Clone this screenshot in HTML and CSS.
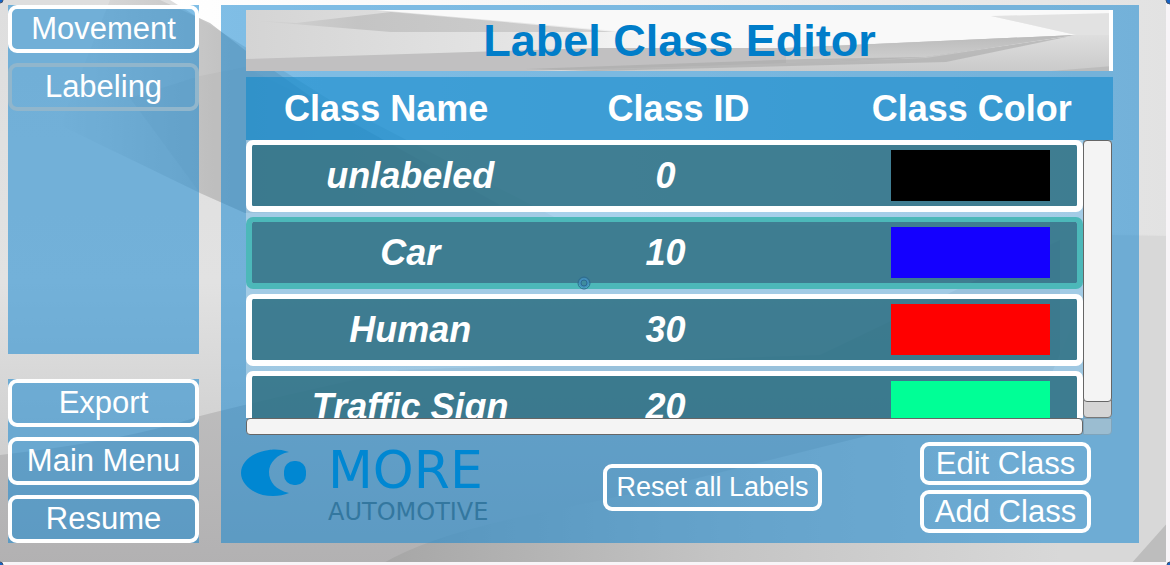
FILE: index.html
```html
<!DOCTYPE html>
<html lang="en">
<head>
<meta charset="utf-8">
<title>Label Class Editor</title>
<link rel="stylesheet" href="styles.css">
</head>
<body>
<svg class="backdrop" viewBox="0 0 1170 565" preserveAspectRatio="none" aria-hidden="true">
  <defs>
    <linearGradient id="base" x1="0" y1="0" x2="0" y2="1"><stop offset="0" stop-color="#dedede"/><stop offset=".5" stop-color="#e2e2e2"/><stop offset=".8" stop-color="#cfcfcf"/></linearGradient>
    <linearGradient id="fold" x1="0" y1="0" x2="1" y2="0"><stop offset="0" stop-color="#c0c0c0" stop-opacity="0"/><stop offset=".4" stop-color="#c0c0c0"/><stop offset="1" stop-color="#d0d0d0"/></linearGradient>
    <linearGradient id="low" x1="0" y1="0" x2="0" y2="1"><stop offset="0" stop-color="#c8c8c8"/><stop offset="1" stop-color="#b2b1b2"/></linearGradient>
    <linearGradient id="right" x1="0" y1="0" x2="1" y2="0"><stop offset="0" stop-color="#a6a6a6"/><stop offset=".5" stop-color="#c4c4c4"/><stop offset="1" stop-color="#d8d8d8"/></linearGradient>
    <linearGradient id="white" x1="0" y1="0" x2="1" y2="0"><stop offset="0" stop-color="#ffffff"/><stop offset=".5" stop-color="#f2f2f2"/><stop offset="1" stop-color="#e2e2e2"/></linearGradient>
  </defs>
  <rect width="1170" height="565" fill="url(#base)"/>
  <path d="M170 0H1170V235L1000 230L560 220L330 100Z" fill="url(#white)"/>
  <path d="M110 0L160 0L210 23L250 54L330 110L500 205L245 213L200 193L60 125Z" fill="url(#fold)"/>
  <path d="M130 98L200 76L245 67L330 110L500 205L245 213L200 193Z" fill="#a8a8a8" opacity=".2"/>
  <path d="M0 455Q130 440 200 416Q270 398 400 370L820 355L1060 240V565H0Z" fill="url(#low)"/>
  <path d="M1040 400L1112 235L1170 236V565H1040Z" fill="#d8d8d8"/>
  <path d="M380 565Q430 535 530 515L650 490L870 435L1060 380V565Z" fill="url(#right)"/>
  <path d="M1130 565L1170 520V565Z" fill="#bdbdbd"/>
  <path d="M1166 0V562H0V565H1170V0Z" fill="#f8f5f8"/>
  <g fill="#1664c8" stroke="#44546c"><circle cx="0" cy="0" r="3"/><circle cx="1170" cy="0" r="4"/><circle cx="0" cy="565" r="3"/><circle cx="1170" cy="565" r="3"/></g>
</svg>
<div class="screen">
  <aside class="sidebar">
    <nav class="panel modes">
      <button class="btn" type="button">Movement</button>
      <button class="btn active" type="button">Labeling</button>
    </nav>
    <nav class="panel actions">
      <button class="btn" type="button">Export</button>
      <button class="btn" type="button">Main Menu</button>
      <button class="btn" type="button">Resume</button>
    </nav>
  </aside>
  <main class="panel editor">
    <header class="title">
      <svg class="title-art" viewBox="0 0 867 61" preserveAspectRatio="none" aria-hidden="true">
        <defs>
          <linearGradient id="t1" x1="0" y1="0" x2="1" y2="0"><stop offset="0" stop-color="#d4d4d4"/><stop offset=".3" stop-color="#e4e4e4"/><stop offset=".5" stop-color="#fafafa"/><stop offset="1" stop-color="#ececec"/></linearGradient>
          <linearGradient id="t2" x1="0" y1="0" x2="0" y2="1"><stop offset="0" stop-color="#bababa"/><stop offset="1" stop-color="#d8d8d8"/></linearGradient>
          <linearGradient id="t3" x1="0" y1="0" x2="1" y2="0"><stop offset="0" stop-color="#d6d6d6"/><stop offset=".3" stop-color="#c4c4c4"/><stop offset="1" stop-color="#d0d0d0"/></linearGradient>
          <linearGradient id="t4" x1="0" y1="0" x2="0" y2="1"><stop offset="0" stop-color="#dedede"/><stop offset="1" stop-color="#cacaca"/></linearGradient>
        </defs>
        <rect width="867" height="61" fill="url(#t1)"/>
        <path d="M130 0H867V6L745 6L830 25L540 37L360 20Z" fill="#f9f9f9"/>
        <path d="M0 10L50 13L145 2L370 22L145 22Z" fill="url(#t3)"/>
        <path d="M0 49L350 38H540L830 25L680 47L430 61H0Z" fill="#c1c0c1"/>
        <path d="M540 38L830 25L680 47L380 61H280L540 54Z" fill="url(#t2)"/>
        <path d="M320 61L680 48L830 25H867V61Z" fill="url(#t4)"/>
        <path d="M280 59L560 49L680 47L825 26L700 52L350 61Z" fill="#a8a8a8" opacity=".6"/>
        <path d="M745 6L830 25H867V3Z" fill="#e2e2e2"/>
        <path d="M805 61L867 56V61Z" fill="#bcbcbc"/>
        <path d="M863 0H867V61H863Z" fill="#fff"/>
      </svg>
      <h1>Label Class Editor</h1>
    </header>
    <div class="classes">
      <table>
        <thead>
          <tr><th scope="col">Class Name</th><th scope="col">Class ID</th><th scope="col">Class Color</th></tr>
        </thead>
        <tbody>
          <tr><td>unlabeled</td><td>0</td><td><span class="swatch black"></span></td></tr>
          <tr class="selected"><td>Car</td><td>10</td><td><span class="swatch blue"></span></td></tr>
          <tr><td>Human</td><td>30</td><td><span class="swatch red"></span></td></tr>
          <tr><td>Traffic Sign</td><td>20</td><td><span class="swatch green"></span></td></tr>
        </tbody>
      </table>
      <div class="track vertical"><div class="thumb"></div></div>
      <div class="track horizontal"><div class="thumb"></div></div>
      <div class="corner"></div>
    </div>
    <footer class="footer">
      <div class="logo">
        <svg class="mark" viewBox="0 0 66 48" aria-hidden="true">
          <path d="M48 3C40 0 32 0 28 1C11 3 0 13 0 24C0 36 14 47 32 47Q41 47 48 44C35 41 28 33 28 23C28 14 36 5 48 3Z"/>
          <rect x="43" y="12" width="22" height="24" rx="10"/>
        </svg>
        <div class="wordmark"><span class="brand">MORE</span><span class="sector">AUTOMOTIVE</span></div>
      </div>
      <button class="btn reset" type="button">Reset all Labels</button>
      <div class="edit">
        <button class="btn" type="button">Edit Class</button>
        <button class="btn" type="button">Add Class</button>
      </div>
    </footer>
  </main>
</div>
<svg class="cursor" viewBox="0 0 14 14" aria-hidden="true"><circle cx="7" cy="7" r="6" fill="none" stroke="#2c6b91"/><circle cx="7" cy="7" r="4" fill="#3f8c9f" stroke="#438fbe" stroke-width="2"/><circle cx="7" cy="7" r="3" fill="none" stroke="#2c6b91"/></svg>
</body>
</html>
```
FILE: styles.css
```css
* { box-sizing: border-box; }
body {
  margin: 0;
  min-height: 100vh;
  position: relative;
  overflow: hidden;
  font-family: "Liberation Sans", Arial, sans-serif;
  color: #fff;
}
.backdrop { position: absolute; inset: 0; width: 100%; height: 100%; z-index: -1; }
.screen {
  display: flex;
  gap: 22px;
  min-height: 100vh;
  padding: 5px 31px 22px 8px;
}
.panel { background: rgba(20, 135, 209, .54); }
.sidebar { display: flex; flex-direction: column; gap: 25px; width: 191px; flex: none; }
.modes, .actions { display: flex; flex-direction: column; gap: 10px; }
.modes { flex: 1; }
.btn {
  height: 48px;
  padding: 0;
  border: 4px solid #fff;
  border-radius: 9px;
  background: transparent;
  color: #fff;
  font: 31px/36px "Liberation Sans", Arial, sans-serif;
  white-space: nowrap;
}
.btn.active { border-color: #91b6cc; }
.editor { flex: 1; display: flex; flex-direction: column; padding: 5px 26px 10px 25px; }
.title { display: grid; margin-bottom: 6px; }
.title-art { grid-area: 1 / 1; width: 100%; height: 61px; }
.title h1 {
  grid-area: 1 / 1;
  margin: 0;
  font-size: 45px;
  line-height: 61px;
  text-align: center;
  color: #007dc9;
  z-index: 1;
}
.classes { display: grid; grid-template-columns: 1fr 30px; grid-template-rows: 63px 278px 17px; }
table { display: contents; }
thead { display: block; grid-column: 1 / -1; background: rgba(12, 136, 204, .56); }
tr { display: grid; align-items: center; }
thead tr { grid-template-columns: 280fr 304fr 282fr; height: 63px; }
th, td { padding: 0; text-align: center; font-size: 36px; line-height: 42px; }
tbody {
  display: block;
  overflow: hidden;
  background: rgba(255, 255, 255, .34);
}
tbody tr {
  grid-template-columns: 316fr 194fr 314fr;
  height: 72px;
  margin-bottom: 5px;
  border: 6px solid #fff;
  border-top-width: 5px;
  border-radius: 7px;
  background: rgba(24, 94, 112, .72) padding-box;
  font-weight: bold;
  font-style: italic;
}
tbody tr.selected { border-color: #4cb8b9; }
td:last-child { display: flex; justify-content: flex-end; padding-right: 27px; }
.swatch { width: 159px; height: 51px; }
.black { background: #000; }
.blue { background: #1400ff; }
.red { background: #f00; }
.green { background: #00ff96; }
.track { border-radius: 4px; }
.vertical { background: #d5d5d5; border: 1px solid #777; margin-right: 1px; }
.thumb { border-radius: 4px; background: #f4f4f4; border: 1px solid #666; }
.vertical .thumb { margin: -1px; height: 262px; }
.horizontal .thumb { height: 17px; }
.corner { background: rgba(200, 205, 205, .5); border: 1px solid #7fa4bb; border-radius: 0 0 4px 0; margin-right: 1px; }
.footer {
  flex: 1;
  display: flex;
  align-items: center;
  justify-content: space-between;
  padding: 6px 22px 0 0;
}
.logo { display: flex; align-items: center; gap: 21px; width: 264px; margin-left: -5px; }
.mark { width: 66px; height: 48px; flex: none; fill: #0087d2; margin-bottom: 28px; }
.wordmark { display: flex; flex-direction: column; margin-bottom: 6px; font-family: "DejaVu Sans", sans-serif; }
.brand { color: #0087d2; font-size: 52px; line-height: 56px; }
.sector { color: #33779f; font-size: 24px; line-height: 28px; }
.reset { width: 219px; height: 47px; font-size: 27px; }
.edit { display: flex; flex-direction: column; gap: 5px; width: 171px; }
.edit .btn { height: 43px; }
.cursor { position: absolute; left: 577px; top: 276px; width: 14px; height: 14px; }
```
